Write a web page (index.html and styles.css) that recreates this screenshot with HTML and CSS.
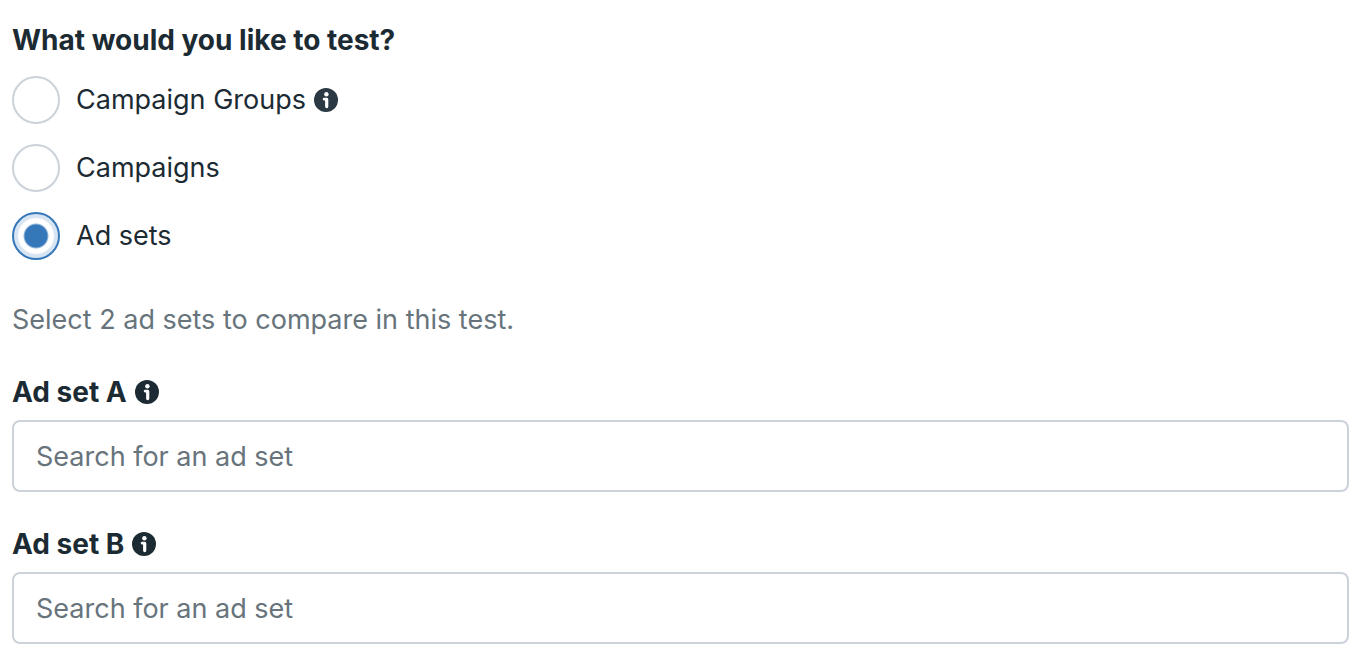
FILE: index.html
```html
<!DOCTYPE html>
<html lang="en">
<head>
  <meta charset="UTF-8">
  <meta name="viewport" content="width=device-width, initial-scale=1.0">
  <title>Create test</title>
  <link rel="stylesheet" href="styles.css">
</head>
<body>
  <form class="test-form">
    <fieldset class="choices">
      <legend>What would you like to test?</legend>
      <div class="choice">
        <input type="radio" name="level" id="level-groups">
        <label for="level-groups">Campaign Groups</label>
        <svg class="info info-soft" viewBox="0 0 24 24" aria-hidden="true">
          <circle cx="12" cy="12" r="12"/>
          <circle class="mark" cx="12.4" cy="6.2" r="2.2"/>
          <path class="mark" d="M10 9.8H12.7Q14.3 9.8 14.3 11.4V18.6Q14.3 20.2 12.7 20.2T11.1 18.6V12.4H10Q8.7 12.2 8.7 11.1T10 9.8Z"/>
        </svg>
      </div>
      <div class="choice">
        <input type="radio" name="level" id="level-campaigns">
        <label for="level-campaigns">Campaigns</label>
      </div>
      <div class="choice">
        <input type="radio" name="level" id="level-adsets" checked>
        <label for="level-adsets">Ad sets</label>
      </div>
    </fieldset>

    <p class="hint">Select 2 ad sets to compare in this test.</p>

    <div class="field">
      <div class="field-title">
        <label for="adset-a">Ad set A</label>
        <svg class="info" viewBox="0 0 24 24" aria-hidden="true">
          <circle cx="12" cy="12" r="12"/>
          <circle class="mark" cx="12.4" cy="6.2" r="2.2"/>
          <path class="mark" d="M10 9.8H12.7Q14.3 9.8 14.3 11.4V18.6Q14.3 20.2 12.7 20.2T11.1 18.6V12.4H10Q8.7 12.2 8.7 11.1T10 9.8Z"/>
        </svg>
      </div>
      <input type="text" id="adset-a" placeholder="Search for an ad set">
    </div>

    <div class="field">
      <div class="field-title">
        <label for="adset-b">Ad set B</label>
        <svg class="info" viewBox="0 0 24 24" aria-hidden="true">
          <circle cx="12" cy="12" r="12"/>
          <circle class="mark" cx="12.4" cy="6.2" r="2.2"/>
          <path class="mark" d="M10 9.8H12.7Q14.3 9.8 14.3 11.4V18.6Q14.3 20.2 12.7 20.2T11.1 18.6V12.4H10Q8.7 12.2 8.7 11.1T10 9.8Z"/>
        </svg>
      </div>
      <input type="text" id="adset-b" placeholder="Search for an ad set">
    </div>
  </form>
</body>
</html>
```
FILE: styles.css
```css
* {
  box-sizing: border-box;
}

body {
  margin: 0;
  background: #fff;
  color: #1c2b33;
  font-family: Inter, sans-serif;
  font-size: 27px;
  line-height: 40px;
}

.test-form {
  padding: 20px 17px 28px 12px;
}

.choices {
  display: flex;
  flex-direction: column;
  gap: 20px;
  margin: 0;
  padding: 0;
  border: 0;
}

legend {
  margin-bottom: 16px;
  padding: 0;
  font-size: 28px;
  font-weight: 700;
}

.choice {
  display: flex;
  align-items: center;
}

.choice input {
  appearance: none;
  width: 48px;
  height: 48px;
  margin: 0 16px 0 0;
  border: 2px solid #cbd2d9;
  border-radius: 50%;
  background: #fff;
}

.choice input:checked {
  border-color: #3578ba;
  background: radial-gradient(circle, #3578ba 11px, #fff 13px, #fff 17px, #d7e4f1 19px);
}

.info {
  width: 24px;
  height: 24px;
  margin-left: 8px;
  fill: #1c2b33;
}

.info-soft {
  fill: #2a3943;
}

.info .mark {
  fill: #fff;
}

.hint {
  margin: 40px 0 32px;
  color: #67747c;
}

.field + .field {
  margin-top: 32px;
}

.field-title {
  display: flex;
  align-items: center;
  margin-bottom: 8px;
  font-size: 28px;
  font-weight: 700;
}

.field input {
  display: block;
  width: 100%;
  height: 72px;
  padding: 0 22px;
  border: 2px solid #cbd2d9;
  border-radius: 8px;
  background: #fff;
  color: #1c2b33;
  font: inherit;
}

.field input::placeholder {
  color: #67747c;
  opacity: 1;
}
```
